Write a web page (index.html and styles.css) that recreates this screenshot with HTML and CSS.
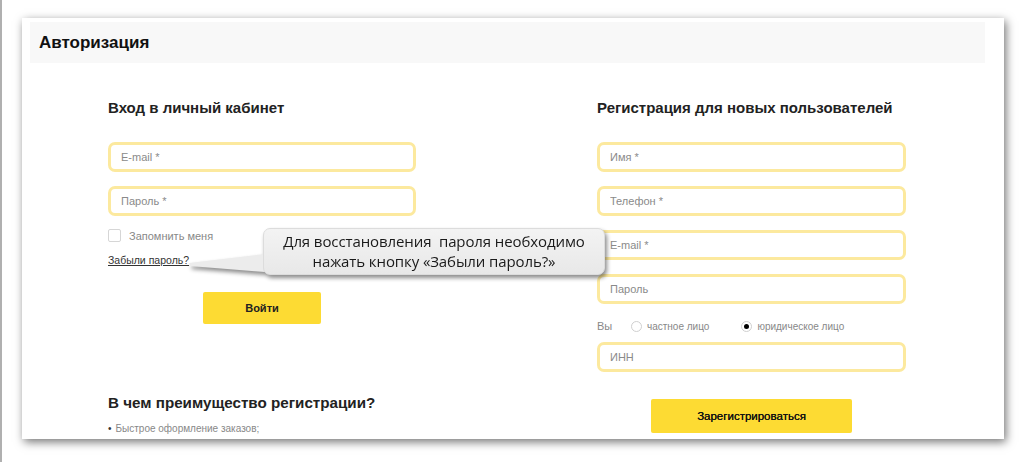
FILE: index.html
```html
<!DOCTYPE html>
<html lang="ru">
<head>
  <meta charset="UTF-8" />
  <meta name="viewport" content="width=device-width, initial-scale=1.0"/>
  <title>Авторизация</title>
  <link rel="stylesheet" href="styles.css">
</head>
<body>
  <div class="page">
    <div class="main-box">
      <div class="head-bar">
        <h2>Авторизация</h2>
      </div>

      <div class="cols">
        <div class="login-box">
          <h3>Вход в личный кабинет</h3>
          <input type="text" class="field" placeholder="E-mail *" />
          <input type="password" class="field" placeholder="Пароль *" />
          <label class="remember"><span class="check"></span> Запомнить меня</label>
          <a class="forgot" href="#">Забыли пароль?</a>
          <div class="btn-row">
            <button class="yellow-btn login-btn">Войти</button>
          </div>
          <h3 class="benefits-title">В чем преимущество регистрации?</h3>
          <ul class="benefits">
            <li>Быстрое оформление заказов;</li>
          </ul>
        </div>

        <div class="register-box">
          <h3>Регистрация для новых пользователей</h3>
          <input type="text" class="field" placeholder="Имя *" />
          <input type="text" class="field" placeholder="Телефон *" />
          <input type="text" class="field" placeholder="E-mail *" />
          <input type="password" class="field" placeholder="Пароль" />
          <div class="who">
            <span class="who-label">Вы</span>
            <label class="radio-opt"><span class="radio"></span> частное лицо</label>
            <label class="radio-opt"><span class="radio checked"></span> юридическое лицо</label>
          </div>
          <input type="text" class="field inn" placeholder="ИНН" />
          <div class="btn-row">
            <button class="yellow-btn register-btn">Зарегистрироваться</button>
          </div>
        </div>
      </div>

      <div class="hint">
        <div class="hint-arrow"></div>
        <div class="hint-box">Для восстановления&nbsp; пароля необходимо<br>нажать кнопку «Забыли пароль?»</div>
      </div>
    </div>
  </div>
</body>
</html>
```

FILE: styles.css
```css
* {
  box-sizing: border-box;
  font-family: 'Liberation Sans', Arial, sans-serif;
}

body {
  margin: 0;
  background: #fff;
}

.page {
  height: 462px;
  border-left: 2px solid #b0b0b0;
  padding: 18px 0 0 20px;
  overflow: hidden;
}

.main-box {
  position: relative;
  width: 982px;
  height: 421px;
  background: #fff;
  padding: 4px 19px 0 8px;
  overflow: hidden;
  box-shadow: 2px 3px 9px rgba(0, 0, 0, 0.55);
}

.head-bar {
  height: 41px;
  background: #f8f8f8;
  padding-left: 9px;
  display: flex;
  align-items: center;
}

h2 {
  margin: 0;
  font-size: 17px;
  font-weight: bold;
  color: #111;
}

.cols {
  display: grid;
  grid-template-columns: 308px 309px;
  column-gap: 181px;
  padding-left: 78px;
  padding-top: 36px;
}

h3 {
  margin: 0 0 26px;
  font-size: 15px;
  line-height: 17px;
  font-weight: bold;
  color: #222;
}

.field {
  display: block;
  width: 100%;
  height: 30px;
  margin-bottom: 14px;
  padding: 0 10px;
  border: 3px solid #fce99e;
  border-radius: 7px;
  font-size: 11px;
  color: #555;
  outline: none;
}

.field::placeholder {
  color: #8a8a8a;
}

.remember {
  display: flex;
  align-items: center;
  gap: 8px;
  margin-top: -1px;
  font-size: 11px;
  color: #888;
}

.check {
  width: 13px;
  height: 13px;
  border: 1px solid #d6d6d6;
  border-radius: 2px;
  background: #fff;
}

.forgot {
  display: inline-block;
  margin-top: 12px;
  font-size: 10.5px;
  color: #333;
  text-decoration: underline;
}

.btn-row {
  display: flex;
  justify-content: center;
}

.yellow-btn {
  border: none;
  border-radius: 2px;
  background: #fddb33;
  color: #222;
  font-size: 11px;
  font-weight: bold;
  cursor: pointer;
}

.login-btn {
  width: 118px;
  height: 32px;
  margin-top: 24px;
}

.benefits-title {
  margin: 70px 0 10px;
  font-size: 15.2px;
}

.benefits {
  margin: 0;
  padding: 0;
  list-style: none;
  font-size: 10px;
  line-height: 16px;
  color: #888;
}

.benefits li::before {
  content: "•";
  color: #333;
  margin-right: 4px;
}

.who {
  display: flex;
  align-items: center;
  margin-top: -1px;
  font-size: 10px;
  color: #888;
  height: 18px;
}

.who-label {
  width: 34px;
  font-size: 11px;
}

.radio-opt {
  display: flex;
  align-items: center;
  gap: 5px;
  margin-right: 32px;
}

.radio {
  width: 11px;
  height: 11px;
  border: 1px solid #d0d0d0;
  border-radius: 50%;
  background: #fff;
  position: relative;
}

.radio.checked::after {
  content: "";
  position: absolute;
  left: 2px;
  top: 2px;
  width: 5px;
  height: 5px;
  border-radius: 50%;
  background: #000;
}

.inn {
  margin-top: 7px;
  height: 30px;
}

.register-btn {
  width: 201px;
  height: 34px;
  margin-top: 13px;
  font-weight: normal;
  font-size: 11.5px;
  color: #111;
  text-shadow: 0 0 0.4px #111;
}

.hint {
  position: absolute;
  left: 167px;
  top: 210px;
  width: 420px;
  height: 50px;
  filter: drop-shadow(2px 3px 2px rgba(0, 0, 0, 0.45));
}

.hint-arrow {
  position: absolute;
  left: 0;
  top: 24px;
  width: 80px;
  height: 22px;
  background: #ececec;
  clip-path: polygon(0 11px, 76px 2px, 76px 20px, 1px 14px);
}

.hint-box {
  position: absolute;
  left: 74px;
  top: 0;
  width: 342px;
  height: 47px;
  border-radius: 7px;
  background: linear-gradient(#f3f3f3, #e8e8e8);
  border: 1px solid #dcdcdc;
  font-family: 'Open Sans', sans-serif;
  font-size: 15px;
  line-height: 20px;
  letter-spacing: -0.1px;
  color: #1a1a1a;
  text-align: center;
  padding-top: 2px;
}
```
